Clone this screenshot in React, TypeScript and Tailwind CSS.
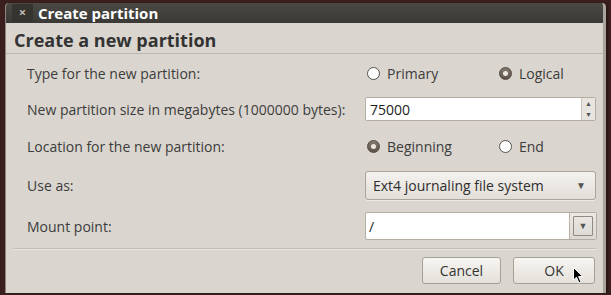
import React from "react";

const font = { fontFamily: '"Open Sans", "Noto Sans", sans-serif' };

function Radio({ checked, label }: { checked: boolean; label: string }) {
  return (
    <div className="flex items-center gap-[7px]">
      {checked ? (
        <div className="w-[13px] h-[13px] rounded-full border border-[#4f463e] bg-gradient-to-b from-[#857a70] to-[#5d534a] flex items-center justify-center">
          <div className="w-[5px] h-[5px] rounded-full bg-[#ece8e2]" />
        </div>
      ) : (
        <div className="w-[13px] h-[13px] rounded-full border border-[#55514b] bg-white" />
      )}
      <span>{label}</span>
    </div>
  );
}

export default function App() {
  return (
    <div
      className="w-[611px] h-[295px] bg-[#3b1f1e] relative overflow-hidden text-[14px] text-[#3c3c3c]"
      style={font}
    >
      <div className="absolute left-[5px] top-[3px] w-[601px] h-[290px] flex flex-col bg-[#dad6cf] border-l border-[#8a857d] border-r-[3px] border-r-[#a9a49c] rounded-t-[4px] overflow-hidden shadow-[2px_0_2px_rgba(0,0,0,0.3)]">
        {/* title bar */}
        <div className="h-[20px] flex items-center bg-gradient-to-b from-[#4a4944] to-[#3a3935] shrink-0">
          <div className="ml-[6px] w-[21px] h-[18px] flex items-center justify-center bg-[#35342f] rounded-[2px] text-[#bdbab4] text-[13px] font-bold">
            ×
          </div>
          <span className="ml-[5px] text-white font-bold text-[15px] leading-none">Create partition</span>
        </div>
        {/* header */}
        <div className="h-[31px] px-[8px] pt-[6px] text-[18px] font-bold text-[#333] leading-[22px] border-b border-[#bcb7ae] shrink-0">
          Create a new partition
        </div>
        {/* body */}
        <div className="flex flex-col pl-[21px] pr-[7px]">
          <div className="h-[36px] flex items-center mt-[1px]">
            <div className="w-[340px]">Type for the new partition:</div>
            <div className="flex-1 flex">
              <div className="w-[132px]"><Radio checked={false} label="Primary" /></div>
              <Radio checked={true} label="Logical" />
            </div>
          </div>
          <div className="h-[36px] flex items-center">
            <div className="w-[338px] whitespace-nowrap">New partition size in megabytes (1000000 bytes):</div>
            <div className="flex-1 h-[24px] flex border border-[#b3ada4] bg-white rounded-[2px]">
              <div className="flex-1 px-[4px] flex items-center text-[#222]">75000</div>
              <div className="w-[14px] flex flex-col bg-[#e8e5e0] border-l border-[#c8c3bb] text-[#555] text-[7px] leading-none">
                <div className="flex-1 flex items-center justify-center">▲</div>
                <div className="flex-1 flex items-center justify-center">▼</div>
              </div>
            </div>
          </div>
          <div className="h-[38px] flex items-center">
            <div className="w-[340px]">Location for the new partition:</div>
            <div className="flex-1 flex">
              <div className="w-[132px]"><Radio checked={true} label="Beginning" /></div>
              <Radio checked={false} label="End" />
            </div>
          </div>
          <div className="h-[40px] flex items-center">
            <div className="w-[338px]">Use as:</div>
            <div className="flex-1 h-[29px] flex items-center justify-between px-[7px] border border-[#aaa49b] rounded-[3px] bg-gradient-to-b from-[#f4f2ef] to-[#e2ded8] text-[#2e2e2e] shadow-[0_1px_0_rgba(255,255,255,0.5)]">
              <span>Ext4 journaling file system</span>
              <span className="text-[10px] text-[#555] pr-[2px]">▼</span>
            </div>
          </div>
          <div className="h-[42px] flex items-center">
            <div className="w-[338px]">Mount point:</div>
            <div className="flex-1 h-[28px] flex border border-[#b3ada4] bg-white rounded-[2px] -mr-[1px]">
              <div className="flex-1 px-[3px] flex items-center text-[#222]">/</div>
              <div className="w-[27px] flex items-center justify-center bg-gradient-to-b from-[#ece9e5] to-[#dcd8d2] border-l border-[#b8b2a9]">
                <div className="w-[20px] h-[20px] border border-[#8f8a83] rounded-[1px] flex items-center justify-center text-[9px] text-[#555]">▼</div>
              </div>
            </div>
          </div>
        </div>
        <div className="mx-[7px] mt-[1px] border-t border-[#c3beb5] shadow-[0_1px_0_#ebe8e3]" />
        <div className="flex justify-end gap-[12px] pr-[8px] pt-[8px]">
          <div className="w-[79px] h-[27px] flex items-center justify-center border border-[#a6a097] rounded-[3px] bg-gradient-to-b from-[#f7f5f2] to-[#e4e0da] text-[#333]">
            Cancel
          </div>
          <div className="w-[82px] h-[27px] flex items-center justify-center border border-[#a6a097] rounded-[3px] bg-gradient-to-b from-[#f7f5f2] to-[#e4e0da] text-[#333] relative">
            OK
            <svg className="absolute left-[59px] top-[9px]" width="11" height="17" viewBox="0 0 11 17">
              <path d="M0.5 0.5 L0.5 13 L3.5 10.3 L6 16 L8 15 L5.6 9.6 L9.8 9.6 Z" fill="#000" stroke="#fff" strokeWidth="1" />
            </svg>
          </div>
        </div>
      </div>
    </div>
  );
}
